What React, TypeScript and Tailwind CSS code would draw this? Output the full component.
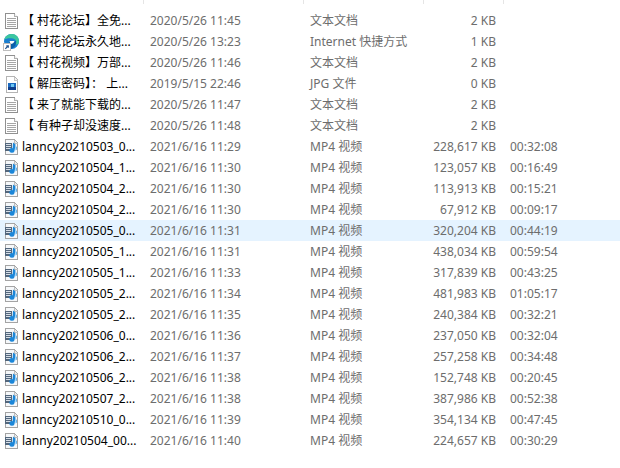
import React from 'react'

type FileRow = {
  name: string
  date: string
  type: string
  size: string
  length?: string
  icon: 'text' | 'edge' | 'jpg' | 'video'
  selected?: boolean
}

const rows: FileRow[] = [
  { name: '【 村花论坛】全免...', date: '2020/5/26 11:45', type: '文本文档', size: '2 KB', icon: 'text' },
  { name: '【 村花论坛永久地...', date: '2020/5/26 13:23', type: 'Internet 快捷方式', size: '1 KB', icon: 'edge' },
  { name: '【 村花视频】万部...', date: '2020/5/26 11:46', type: '文本文档', size: '2 KB', icon: 'text' },
  { name: '【 解压密码】： 上...', date: '2019/5/15 22:46', type: 'JPG 文件', size: '0 KB', icon: 'jpg' },
  { name: '【 来了就能下载的...', date: '2020/5/26 11:47', type: '文本文档', size: '2 KB', icon: 'text' },
  { name: '【 有种子却没速度...', date: '2020/5/26 11:48', type: '文本文档', size: '2 KB', icon: 'text' },
  { name: 'lanncy20210503_0...', date: '2021/6/16 11:29', type: 'MP4 视频', size: '228,617 KB', length: '00:32:08', icon: 'video' },
  { name: 'lanncy20210504_1...', date: '2021/6/16 11:30', type: 'MP4 视频', size: '123,057 KB', length: '00:16:49', icon: 'video' },
  { name: 'lanncy20210504_2...', date: '2021/6/16 11:30', type: 'MP4 视频', size: '113,913 KB', length: '00:15:21', icon: 'video' },
  { name: 'lanncy20210504_2...', date: '2021/6/16 11:30', type: 'MP4 视频', size: '67,912 KB', length: '00:09:17', icon: 'video' },
  { name: 'lanncy20210505_0...', date: '2021/6/16 11:31', type: 'MP4 视频', size: '320,204 KB', length: '00:44:19', icon: 'video', selected: true },
  { name: 'lanncy20210505_1...', date: '2021/6/16 11:31', type: 'MP4 视频', size: '438,034 KB', length: '00:59:54', icon: 'video' },
  { name: 'lanncy20210505_1...', date: '2021/6/16 11:33', type: 'MP4 视频', size: '317,839 KB', length: '00:43:25', icon: 'video' },
  { name: 'lanncy20210505_2...', date: '2021/6/16 11:34', type: 'MP4 视频', size: '481,983 KB', length: '01:05:17', icon: 'video' },
  { name: 'lanncy20210505_2...', date: '2021/6/16 11:35', type: 'MP4 视频', size: '240,384 KB', length: '00:32:21', icon: 'video' },
  { name: 'lanncy20210506_0...', date: '2021/6/16 11:36', type: 'MP4 视频', size: '237,050 KB', length: '00:32:04', icon: 'video' },
  { name: 'lanncy20210506_2...', date: '2021/6/16 11:37', type: 'MP4 视频', size: '257,258 KB', length: '00:34:48', icon: 'video' },
  { name: 'lanncy20210506_2...', date: '2021/6/16 11:38', type: 'MP4 视频', size: '152,748 KB', length: '00:20:45', icon: 'video' },
  { name: 'lanncy20210507_2...', date: '2021/6/16 11:38', type: 'MP4 视频', size: '387,986 KB', length: '00:52:38', icon: 'video' },
  { name: 'lanncy20210510_0...', date: '2021/6/16 11:39', type: 'MP4 视频', size: '354,134 KB', length: '00:47:45', icon: 'video' },
  { name: 'lanny20210504_00...', date: '2021/6/16 11:40', type: 'MP4 视频', size: '224,657 KB', length: '00:30:29', icon: 'video' },
]

// 18x18 boxes, so every icon keeps its place in the 22px name gutter
const TextIcon = () => (
  <svg width="18" height="18" viewBox="0 0 18 18" shapeRendering="crispEdges">
    <path d="M3.5 1.5H12.5L15.5 4.5V16.5H3.5Z" fill="#fff" stroke="#909090" />
    <path d="M12.5 1.5V4.5H15.5" fill="#f0f0f0" stroke="#b0b0b0" />
    <path d="M5 6.5H14M5 8.5H14M5 10.5H14M5 12.5H14M5 14.5H14" stroke="#a6a6a6" />
  </svg>
)

const EdgeIcon = () => (
  <svg width="18" height="18" viewBox="0 0 18 18">
    <circle cx="9.5" cy="8.5" r="7.5" fill="#1a7fd0" />
    <path d="M2.2 6.5C3.5 2 7.5 0.8 10.5 1C14.5 1.3 17.3 4.5 17 9C16.8 11 15 11.8 13.5 11.5C15 9.5 14.5 6.5 11 5.5C7.5 4.6 3.8 5.5 2.2 6.5Z" fill="#3cc6a0" />
    <path d="M7 8H14C14.5 11 12.5 15.5 8 16Z" fill="#0b5ea8" />
    <path d="M7.5 8H12.5C12 10 10.5 11 8.5 11Z" fill="#ffffff" />
    <rect x="1.5" y="10.5" width="7" height="7" fill="#fff" stroke="#bdbdbd" shapeRendering="crispEdges" />
    <path d="M3.3 15.8L6 13M4.3 12.8H6.3V14.8" fill="none" stroke="#24558f" strokeWidth="1.2" />
  </svg>
)

const JpgIcon = () => (
  <svg width="18" height="18" viewBox="0 0 18 18" shapeRendering="crispEdges">
    <path d="M4.5 1.5H12L15.5 5V17.5H4.5Z" fill="#fff" stroke="#b4b4b4" />
    <path d="M12 1.5V5H15.5" fill="#f2f2f2" stroke="#c4c4c4" />
    <rect x="6" y="8" width="8" height="7" fill="#1b6ac0" />
    <rect x="6" y="12" width="8" height="3" fill="#0f3f8c" />
    <rect x="9" y="9" width="3" height="3" fill="#6cc6f2" />
  </svg>
)

const VideoIcon = () => (
  <svg width="18" height="18" viewBox="0 0 18 18">
    <path d="M3.5 1.5H12L15.5 5V16.5H3.5Z" fill="#f6f8fa" stroke="#a4a4a4" shapeRendering="crispEdges" />
    <path d="M12 1.5V5H15.5" fill="#e8ecef" stroke="#bdbdbd" shapeRendering="crispEdges" />
    <rect x="3" y="5" width="7" height="8" fill="#54677c" />
    <path d="M4 6.5H9M4 8.5H9M4 10.5H9" stroke="#e6edf4" strokeWidth="0.9" />
    <path d="M11 4.5L13.6 6.5L12.6 12.5A2.6 2.3 0 1 1 10.6 10.2Z" fill="#1b86d8" />
    <path d="M13.5 8L15 9V11.5L13.5 12.5Z" fill="#62b4ec" />
  </svg>
)

const icons = {
  text: <TextIcon />,
  edge: <EdgeIcon />,
  jpg: <JpgIcon />,
  video: <VideoIcon />,
}

export default function App() {
  return (
    <div className="h-[468px] w-[620px] overflow-hidden bg-white font-['Noto_Sans','Noto_Sans_CJK_SC',sans-serif] text-[12px]">
      {/* column dividers */}
      <div className="flex h-[4px]">
        <div className="w-[144px] border-r border-[#e5e5e5]" />
        <div className="w-[160px] border-r border-[#e5e5e5]" />
        <div className="w-[120px] border-r border-[#e5e5e5]" />
        <div className="w-[80px] border-r border-[#e5e5e5]" />
      </div>

      <div className="pt-[6px]">
        {rows.map((row, i) => (
          <div
            key={i}
            className={`flex h-[21px] items-center leading-[21px] ${row.selected ? 'bg-[#e5f3ff]' : ''}`}
          >
            <div className="flex w-[22px] shrink-0 justify-center">{icons[row.icon]}</div>
            <div className="w-[128px] shrink-0 whitespace-nowrap text-black">{row.name}</div>
            <div className="w-[160px] shrink-0 whitespace-nowrap text-[#6d6d6d]">{row.date}</div>
            <div className="w-[100px] shrink-0 whitespace-nowrap text-[#6d6d6d]">{row.type}</div>
            <div className="w-[86px] shrink-0 whitespace-nowrap text-right text-[#6d6d6d]">{row.size}</div>
            <div className="ml-[14px] whitespace-nowrap text-[#6d6d6d]">{row.length}</div>
          </div>
        ))}
      </div>
    </div>
  )
}
